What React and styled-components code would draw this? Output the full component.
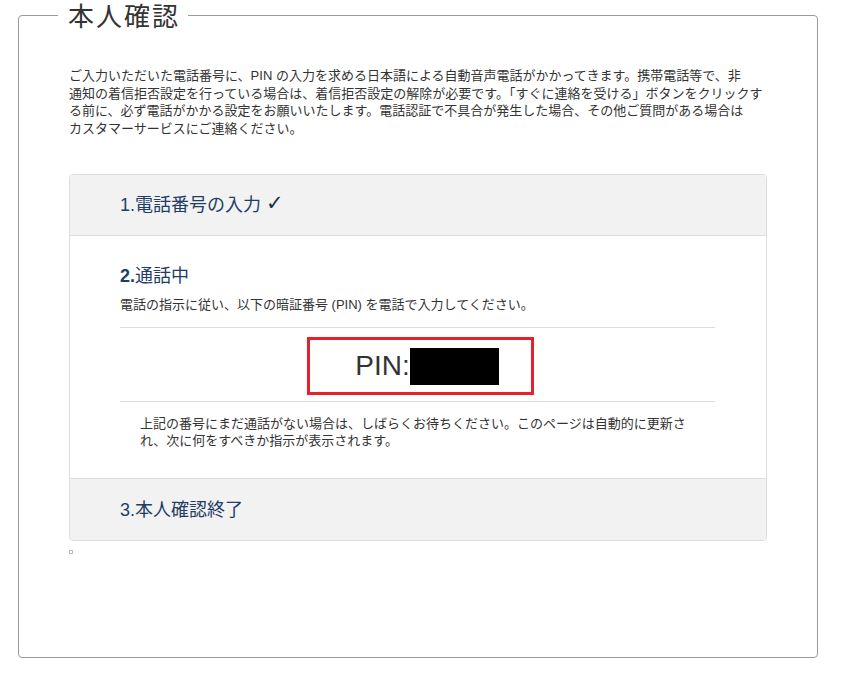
import React from 'react';
import styled, { createGlobalStyle } from 'styled-components';

const GlobalStyle = createGlobalStyle`
    body {
        margin: 0;
        background: #fff;
        font-family: "Liberation Sans", "Noto Sans CJK JP", sans-serif;
        color: #333;
    }
`;

function App() {
    return (
        <Page>
            <GlobalStyle />
            <Frame>
                <Legend>本人確認</Legend>
                <Intro>
                    ご入力いただいた電話番号に、PIN の入力を求める日本語による自動音声電話がかかってきます。携帯電話等で、非<br />
                    通知の着信拒否設定を行っている場合は、着信拒否設定の解除が必要です。「すぐに連絡を受ける」ボタンをクリックす<br />
                    る前に、必ず電話がかかる設定をお願いいたします。電話認証で不具合が発生した場合、その他ご質問がある場合は<br />
                    カスタマーサービスにご連絡ください。
                </Intro>
                <Steps>
                    <StepHeader>1.電話番号の入力 <Check>✓</Check></StepHeader>
                    <StepBody>
                        <StepTitle><b>2.</b>通話中</StepTitle>
                        <StepText>電話の指示に従い、以下の暗証番号 (PIN) を電話で入力してください。</StepText>
                        <PinRow>
                            <PinBox>
                                PIN:<Masked />
                            </PinBox>
                        </PinRow>
                        <Note>
                            上記の番号にまだ通話がない場合は、しばらくお待ちください。このページは自動的に更新され、次に何をすべきか指示が表示されます。
                        </Note>
                    </StepBody>
                    <StepHeader last>3.本人確認終了</StepHeader>
                </Steps>
                <Placeholder />
            </Frame>
        </Page>
    );
}

export default App;

const Page = styled.div`
    padding: 0 46px 28px 18px;
`;

const Frame = styled.fieldset`
    margin: 0;
    border: 1px solid #9a9a9a;
    border-radius: 4px;
    padding: 0 50px 103px 50px;
    min-width: 0;
`;

const Legend = styled.legend`
    margin-left: -11px;
    padding: 0 8px 0 10px;
    font-size: 26px;
    line-height: 30px;
    letter-spacing: 2px;
    color: #333;
    font-family: "Noto Sans CJK JP", sans-serif;
`;

const Intro = styled.p`
    margin: 37px -14px 37px 0;
    font-size: 13px;
    line-height: 17.5px;
    white-space: nowrap;
    color: #333;
`;

const Steps = styled.div`
    border: 1px solid #ddd;
    border-radius: 4px;
    overflow: hidden;
`;

const StepHeader = styled.div`
    height: 61px;
    box-sizing: border-box;
    display: flex;
    align-items: center;
    padding: 0 0 4px 50px;
    background: #f2f2f2;
    border-bottom: ${p => (p.last ? 'none' : '1px solid #ddd')};
    font-size: 18px;
    color: #1f3d66;
    white-space: pre;
`;

const Check = styled.span`
    font-family: "DejaVu Sans", sans-serif;
    font-size: 21px;
    font-weight: bold;
    color: #1f2f45;
`;

const StepBody = styled.div`
    padding: 28px 51px 29px 50px;
    border-bottom: 1px solid #ddd;
`;

const StepTitle = styled.div`
    font-size: 18px;
    line-height: 24px;
    color: #1f3d66;

    b {
        font-weight: bold;
    }
`;

const StepText = styled.div`
    margin-top: 8px;
    font-size: 13px;
    line-height: 18px;
    color: #333;
`;

const PinRow = styled.div`
    margin-top: 13px;
    border-top: 1px solid #ddd;
    border-bottom: 1px solid #ddd;
    padding: 9px 0 6px;
    display: flex;
    justify-content: center;
`;

const PinBox = styled.div`
    width: 207px;
    height: 52px;
    margin-left: 5px;
    padding-left: 14px;
    border: 3px solid #e8202a;
    display: flex;
    align-items: center;
    justify-content: center;
    font-size: 28px;
    color: #333;
`;

const Masked = styled.span`
    display: inline-block;
    width: 89px;
    height: 37px;
    background: #000;
`;

const Note = styled.p`
    margin: 13px 20px 0;
    font-size: 13px;
    line-height: 17px;
    color: #333;
`;

const Placeholder = styled.div`
    width: 2px;
    height: 2px;
    margin-top: 9px;
    border: 1px solid #bbb;
`;
